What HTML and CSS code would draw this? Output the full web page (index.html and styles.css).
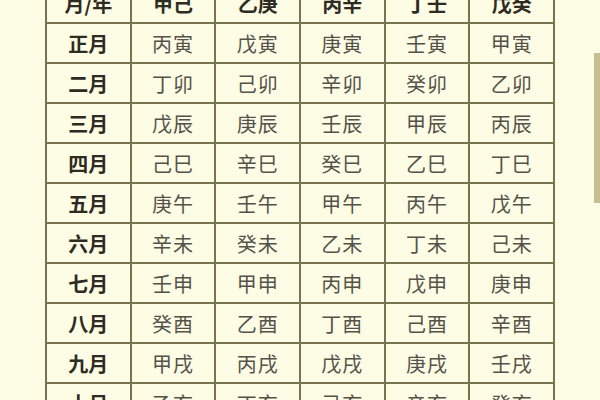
FILE: index.html
```html
<!DOCTYPE html>
<html lang="zh">
<head>
<meta charset="utf-8">
<link rel="stylesheet" href="styles.css">
</head>
<body>
<div class="page">
  <table class="grid">
    <thead>
      <tr><th>月/年</th><th>甲己</th><th>乙庚</th><th>丙辛</th><th>丁壬</th><th>戊癸</th></tr>
    </thead>
    <tbody>
      <tr><th>正月</th><td>丙寅</td><td>戊寅</td><td>庚寅</td><td>壬寅</td><td>甲寅</td></tr>
      <tr><th>二月</th><td>丁卯</td><td>己卯</td><td>辛卯</td><td>癸卯</td><td>乙卯</td></tr>
      <tr><th>三月</th><td>戊辰</td><td>庚辰</td><td>壬辰</td><td>甲辰</td><td>丙辰</td></tr>
      <tr><th>四月</th><td>己巳</td><td>辛巳</td><td>癸巳</td><td>乙巳</td><td>丁巳</td></tr>
      <tr><th>五月</th><td>庚午</td><td>壬午</td><td>甲午</td><td>丙午</td><td>戊午</td></tr>
      <tr><th>六月</th><td>辛未</td><td>癸未</td><td>乙未</td><td>丁未</td><td>己未</td></tr>
      <tr><th>七月</th><td>壬申</td><td>甲申</td><td>丙申</td><td>戊申</td><td>庚申</td></tr>
      <tr><th>八月</th><td>癸酉</td><td>乙酉</td><td>丁酉</td><td>己酉</td><td>辛酉</td></tr>
      <tr><th>九月</th><td>甲戌</td><td>丙戌</td><td>戊戌</td><td>庚戌</td><td>壬戌</td></tr>
      <tr><th>十月</th><td>乙亥</td><td>丁亥</td><td>己亥</td><td>辛亥</td><td>癸亥</td></tr>
    </tbody>
  </table>
  <div class="side-bar"></div>
</div>
</body>
</html>
```
FILE: styles.css
```css
html, body {
  margin: 0;
  padding: 0;
  background: #fdfce4;
  overflow: hidden;
  height: 400px;
}
.page {
  display: flex;
  align-items: flex-start;
  width: 600px;
  height: 400px;
}
.grid {
  margin-top: -18px;
  margin-left: 45px;
  border-collapse: collapse;
  table-layout: fixed;
  width: 510px;
  font-family: "Noto Sans CJK SC", "Noto Sans", sans-serif;
  font-size: 20px;
  flex: none;
}
.grid th, .grid td {
  border: 2px solid #77734f;
  height: 36px;
  padding: 2px 0 0;
  text-align: center;
  vertical-align: middle;
  line-height: 1;
}
.grid th {
  font-weight: bold;
  color: #2e2b22;
}
.grid td {
  font-weight: normal;
  color: #55524a;
  letter-spacing: 1px;
}
.side-bar {
  margin-left: auto;
  margin-top: 53px;
  width: 6px;
  height: 150px;
  background: #c7bf8f;
}
```
